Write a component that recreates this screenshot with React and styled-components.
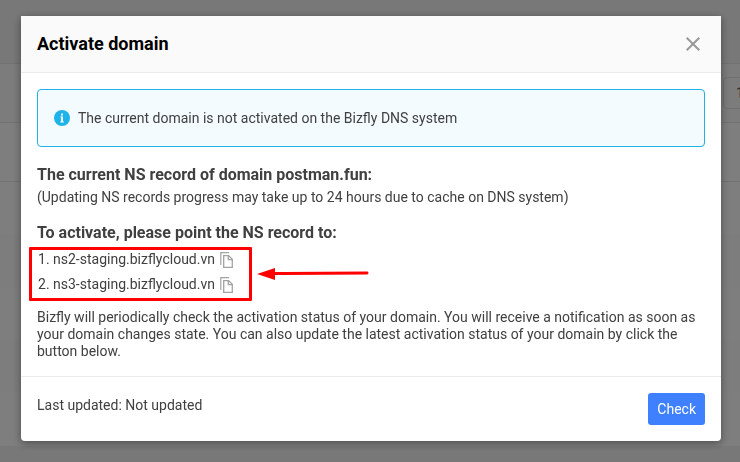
import React from "react";
import styled, { createGlobalStyle } from "styled-components";

const GlobalStyle = createGlobalStyle`
  * {
    box-sizing: border-box;
  }

  body {
    margin: 0;
    background: #f0f0f0;
    color: #404040;
    font-family: Roboto, Arial, sans-serif;
    font-size: 14px;
    line-height: 17px;
    overflow: hidden;
  }
`;

const Backdrop = styled.div`
  min-height: 100vh;
  overflow: hidden;
`;

const TopBar = styled.div`
  height: 63px;
`;

const Toolbar = styled.div`
  display: flex;
  justify-content: flex-end;
  align-items: center;
  height: 59px;
  background: #f8f8f8;
  border-top: 1px solid #e4e4e4;
`;

const FilterButton = styled.button`
  flex: none;
  width: 80px;
  height: 32px;
  margin-right: -63px;
  padding: 0 12px;
  border: 1px solid #e0e0e0;
  border-radius: 4px;
  background: #f8f8f8;
  color: #606060;
  font: inherit;
  text-align: left;
`;

const RecordRow = styled.div`
  height: ${props => props.$height || 53}px;
  background: ${props => (props.$striped ? "#fafafa" : "#fdfdfd")};
  border-top: ${props => (props.$line ? "1px solid #e4e4e4" : "none")};
`;

const Overlay = styled.div`
  position: fixed;
  inset: 0;
  padding: 16px 19px 21px 21px;
  background: rgba(0, 0, 0, 0.5);
`;

const Dialog = styled.section`
  max-width: 700px;
  margin: 0 auto;
  border-radius: 0 0 4px 4px;
  background: #fff;
  box-shadow: 0 2px 8px rgba(0, 0, 0, 0.4);
`;

const DialogHeader = styled.header`
  display: flex;
  align-items: center;
  justify-content: space-between;
  padding: 16px;
  background: #fafafa;
  border-bottom: 1px solid #ebebeb;
`;

const Title = styled.h1`
  margin: 0;
  color: #000;
  font-size: 18px;
  font-weight: 700;
  line-height: 24px;
`;

const CloseButton = styled.button`
  display: flex;
  padding: 4px;
  border: 0;
  background: none;
  color: #999;
`;

const DialogBody = styled.div`
  padding: 16px;
`;

const Notice = styled.div`
  display: flex;
  align-items: center;
  gap: 8px;
  height: 58px;
  margin-bottom: 18px;
  padding: 0 16px;
  border: 1px solid #1eb4e9;
  border-radius: 4px;
  background: #f3fbff;
`;

const Heading = styled.h2`
  margin: 0;
  font-size: 16px;
  font-weight: 700;
  line-height: 20px;
`;

const Note = styled.p`
  margin: 4px 0 17px;
`;

const ServerBlock = styled.div`
  position: relative;
`;

const ServerList = styled.ol`
  margin: 0;
  padding: 4px 0 12px 1px;
  list-style: none;
`;

const Server = styled.li`
  display: flex;
  align-items: center;
  gap: 5px;
  height: 25px;
`;

const CopyButton = styled.button`
  display: flex;
  padding: 0;
  border: 0;
  background: none;
  color: #a3a3a3;
`;

const Highlight = styled.div`
  position: absolute;
  top: 4px;
  left: -8px;
  width: 223px;
  height: 54px;
  border: 3px solid #fe0000;
  border-radius: 1px;
  pointer-events: none;
`;

const Arrow = styled.svg`
  position: absolute;
  top: 23px;
  left: 220px;
  pointer-events: none;
`;

const Paragraph = styled.p`
  margin: 0;
`;

const DialogFooter = styled.footer`
  display: flex;
  align-items: flex-start;
  justify-content: space-between;
  padding: 16px;
  border-top: 1px solid #ebebeb;
`;

const Status = styled.span`
  padding-top: 4px;
`;

const CheckButton = styled.button`
  height: 32px;
  padding: 0 9px;
  border: 0;
  border-radius: 3px;
  background: #3f80ff;
  color: #fff;
  font: inherit;
`;

const servers = ["ns2-staging.bizflycloud.vn", "ns3-staging.bizflycloud.vn"];

const CloseIcon = () => (
  <svg width="16" height="16" viewBox="0 0 16 16" fill="none">
    <path d="M1.7 1.7L14.3 14.3M14.3 1.7L1.7 14.3" stroke="currentColor" strokeWidth="2" />
  </svg>
);

const InfoIcon = () => (
  <svg width="16" height="16" viewBox="0 0 16 16">
    <circle cx="8" cy="8" r="8" fill="#1eb4e9" />
    <path d="M6.4 6.5H9V11.5H9.8V12.5H6.4V11.5H7.1V7.5H6.4Z" fill="#fff" />
    <rect x="7" y="3.4" width="2" height="2" rx="0.5" fill="#fff" />
  </svg>
);

const CopyIcon = () => (
  <svg width="14" height="18" viewBox="0 0 14 18" fill="none" stroke="currentColor">
    <path d="M0.8 14V1.6H9" strokeWidth="1.2" />
    <path d="M3.7 4.6H8.6L12.3 8.3V16.4H3.7Z" strokeWidth="1.3" />
    <path d="M8.3 4.6V8.6H12.3" strokeWidth="1.3" />
  </svg>
);

const App = () => {
  return (
    <>
      <GlobalStyle />
      <Backdrop aria-hidden="true">
        <TopBar />
        <Toolbar>
          <FilterButton tabIndex={-1}>1</FilterButton>
        </Toolbar>
        <RecordRow $line $height={59} />
        <RecordRow $line />
        <RecordRow $striped />
        <RecordRow />
        <RecordRow $striped />
        <RecordRow />
      </Backdrop>
      <Overlay>
        <Dialog role="dialog" aria-labelledby="dialog-title">
          <DialogHeader>
            <Title id="dialog-title">Activate domain</Title>
            <CloseButton aria-label="Close">
              <CloseIcon />
            </CloseButton>
          </DialogHeader>
          <DialogBody>
            <Notice>
              <InfoIcon />
              <span>The current domain is not activated on the Bizfly DNS system</span>
            </Notice>
            <Heading>The current NS record of domain postman.fun:</Heading>
            <Note>
              (Updating NS records progress may take up to 24 hours due to cache on DNS system)
            </Note>
            <Heading>To activate, please point the NS record to:</Heading>
            <ServerBlock>
              <ServerList>
                {servers.map((name, i) => (
                  <Server key={name}>
                    <span>{i + 1}. {name}</span>
                    <CopyButton aria-label={`Copy ${name}`}>
                      <CopyIcon />
                    </CopyButton>
                  </Server>
                ))}
              </ServerList>
              <Highlight />
              <Arrow width="114" height="16" viewBox="0 0 114 16">
                <path d="M15 7.5L110 7" stroke="#fe0000" strokeWidth="3" strokeLinecap="round" />
                <path d="M0 8L18 2V14Z" fill="#fe0000" />
              </Arrow>
            </ServerBlock>
            <Paragraph>
              Bizfly will periodically check the activation status of your domain. You will receive
              a notification as soon as your domain changes state. You can also update the latest
              activation status of your domain by click the button below.
            </Paragraph>
          </DialogBody>
          <DialogFooter>
            <Status>Last updated: Not updated</Status>
            <CheckButton>Check</CheckButton>
          </DialogFooter>
        </Dialog>
      </Overlay>
    </>
  );
};

export default App;
